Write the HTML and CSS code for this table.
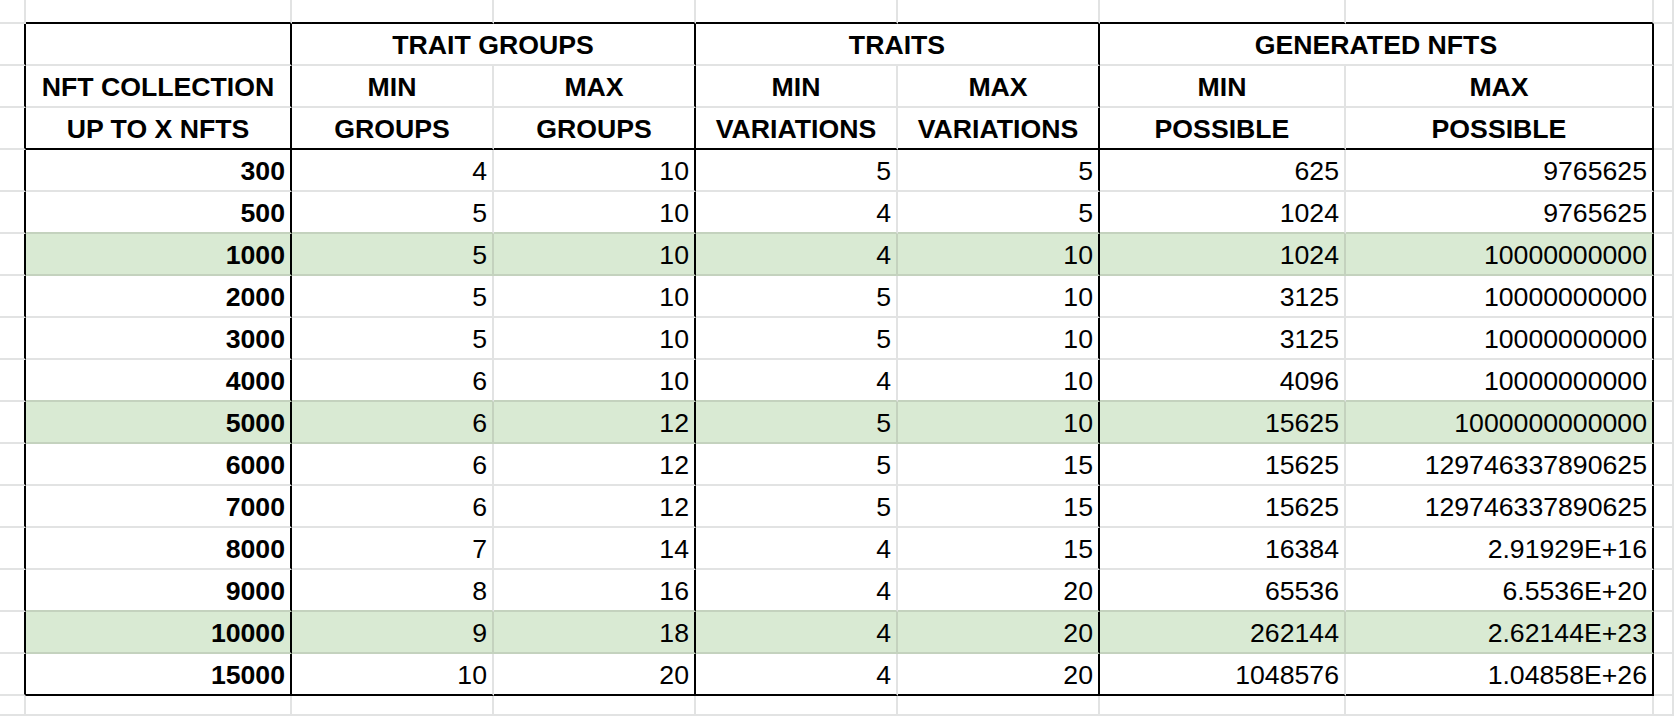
FILE: index.html
```html
<!DOCTYPE html>
<html lang="en">
<head>
<meta charset="utf-8">
<title>NFT Collection Sheet</title>
<link rel="stylesheet" href="styles.css">
</head>
<body>
<div class="sheet" role="table">
  <!-- top stub row -->
  <div class="c"></div><div class="c top"></div><div class="c top"></div><div class="c top"></div><div class="c top"></div><div class="c top"></div><div class="c top"></div><div class="c top"></div><div class="c"></div>

  <!-- header row 1 -->
  <div class="c lead"></div>
  <div class="c hd gr"></div>
  <div class="c hd span2 gr">TRAIT GROUPS</div>
  <div class="c hd span2 gr">TRAITS</div>
  <div class="c hd span2 gr">GENERATED NFTS</div>
  <div class="c"></div>

  <!-- header row 2 -->
  <div class="c lead"></div>
  <div class="c hd gr">NFT COLLECTION</div>
  <div class="c hd">MIN</div><div class="c hd gr">MAX</div>
  <div class="c hd">MIN</div><div class="c hd gr">MAX</div>
  <div class="c hd">MIN</div><div class="c hd gr">MAX</div>
  <div class="c"></div>

  <!-- header row 3 -->
  <div class="c lead"></div>
  <div class="c hd gr hb">UP TO X NFTS</div>
  <div class="c hd hb">GROUPS</div><div class="c hd gr hb">GROUPS</div>
  <div class="c hd hb">VARIATIONS</div><div class="c hd gr hb">VARIATIONS</div>
  <div class="c hd hb">POSSIBLE</div><div class="c hd gr hb">POSSIBLE</div>
  <div class="c"></div>

  <!-- data -->
  <div class="c lead"></div><div class="c b gr">300</div><div class="c">4</div><div class="c gr">10</div><div class="c">5</div><div class="c gr">5</div><div class="c">625</div><div class="c gr">9765625</div><div class="c"></div>

  <div class="c lead"></div><div class="c b gr pre">500</div><div class="c pre">5</div><div class="c gr pre">10</div><div class="c pre">4</div><div class="c gr pre">5</div><div class="c pre">1024</div><div class="c gr pre">9765625</div><div class="c"></div>

  <div class="c lead"></div><div class="c hl b gr">1000</div><div class="c hl">5</div><div class="c hl gr">10</div><div class="c hl">4</div><div class="c hl gr">10</div><div class="c hl">1024</div><div class="c hl gr">10000000000</div><div class="c"></div>

  <div class="c lead"></div><div class="c b gr">2000</div><div class="c">5</div><div class="c gr">10</div><div class="c">5</div><div class="c gr">10</div><div class="c">3125</div><div class="c gr">10000000000</div><div class="c"></div>

  <div class="c lead"></div><div class="c b gr">3000</div><div class="c">5</div><div class="c gr">10</div><div class="c">5</div><div class="c gr">10</div><div class="c">3125</div><div class="c gr">10000000000</div><div class="c"></div>

  <div class="c lead"></div><div class="c b gr pre">4000</div><div class="c pre">6</div><div class="c gr pre">10</div><div class="c pre">4</div><div class="c gr pre">10</div><div class="c pre">4096</div><div class="c gr pre">10000000000</div><div class="c"></div>

  <div class="c lead"></div><div class="c hl b gr">5000</div><div class="c hl">6</div><div class="c hl gr">12</div><div class="c hl">5</div><div class="c hl gr">10</div><div class="c hl">15625</div><div class="c hl gr">1000000000000</div><div class="c"></div>

  <div class="c lead"></div><div class="c b gr">6000</div><div class="c">6</div><div class="c gr">12</div><div class="c">5</div><div class="c gr">15</div><div class="c">15625</div><div class="c gr">129746337890625</div><div class="c"></div>

  <div class="c lead"></div><div class="c b gr">7000</div><div class="c">6</div><div class="c gr">12</div><div class="c">5</div><div class="c gr">15</div><div class="c">15625</div><div class="c gr">129746337890625</div><div class="c"></div>

  <div class="c lead"></div><div class="c b gr">8000</div><div class="c">7</div><div class="c gr">14</div><div class="c">4</div><div class="c gr">15</div><div class="c">16384</div><div class="c gr">2.91929E+16</div><div class="c"></div>

  <div class="c lead"></div><div class="c b gr pre">9000</div><div class="c pre">8</div><div class="c gr pre">16</div><div class="c pre">4</div><div class="c gr pre">20</div><div class="c pre">65536</div><div class="c gr pre">6.5536E+20</div><div class="c"></div>

  <div class="c lead"></div><div class="c hl b gr">10000</div><div class="c hl">9</div><div class="c hl gr">18</div><div class="c hl">4</div><div class="c hl gr">20</div><div class="c hl">262144</div><div class="c hl gr">2.62144E+23</div><div class="c"></div>

  <div class="c lead"></div><div class="c b gr last">15000</div><div class="c last">10</div><div class="c gr last">20</div><div class="c last">4</div><div class="c gr last">20</div><div class="c last">1048576</div><div class="c gr last">1.04858E+26</div><div class="c"></div>

  <!-- bottom stub row -->
  <div class="c"></div><div class="c"></div><div class="c"></div><div class="c"></div><div class="c"></div><div class="c"></div><div class="c"></div><div class="c"></div><div class="c"></div>
</div>
</body>
</html>
```

FILE: styles.css
```css
html, body {
  margin: 0;
  padding: 0;
  background: #ffffff;
}

body {
  overflow: hidden;
  font-family: "Liberation Sans", Arial, Helvetica, sans-serif;
  font-size: 26.67px;
  color: #000000;
}

.sheet {
  display: grid;
  grid-template-columns: 26px 266px 202px 202px 202px 202px 246px 308px 1fr;
  grid-template-rows: 24px repeat(16, 42px) 20px;
  width: 1674px;
  height: 716px;
}

.c {
  box-sizing: border-box;
  min-width: 0;
  overflow: hidden;
  display: flex;
  align-items: flex-end;
  justify-content: flex-end;
  padding: 0 5px 4px 5px;
  line-height: 30px;
  white-space: nowrap;
  border-right: 2px solid #e2e3e3;
  border-bottom: 2px solid #e2e3e3;
}

.top { border-bottom-color: #000000; }
.lead { border-right-color: #000000; }

.hd {
  font-weight: bold;
  justify-content: center;
}

.span2 { grid-column: span 2; }

.b { font-weight: bold; }

.hl {
  background: #d9ead3;
  border-right-color: #c4d2be;
  border-bottom-color: #c4d2be;
}

.pre { border-bottom-color: #c4d2be; }

.gr { border-right-color: #000000; }

.hb,
.last { border-bottom-color: #000000; }
```
